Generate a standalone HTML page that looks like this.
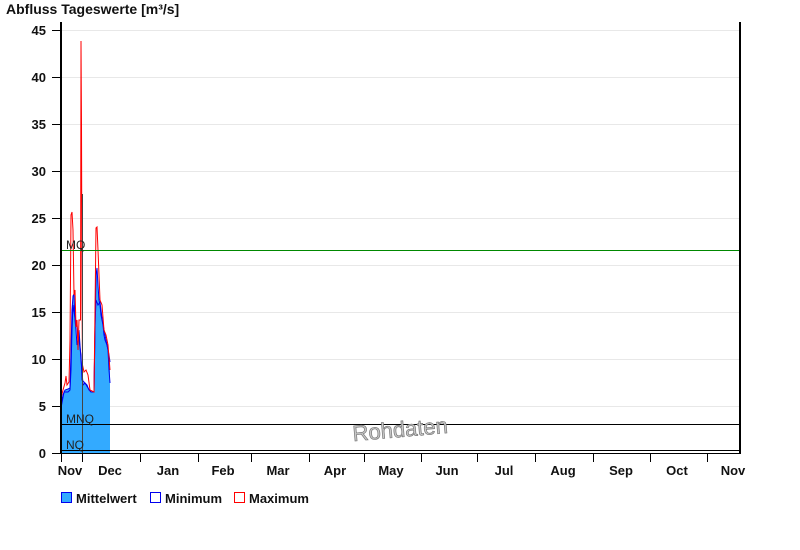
<!DOCTYPE html>
<html><head><meta charset="utf-8"><style>
html,body{margin:0;padding:0;background:#fff;width:800px;height:550px;overflow:hidden}
svg{display:block;font-family:"Liberation Sans",Arial,sans-serif}
</style></head><body>
<svg width="800" height="550" viewBox="0 0 800 550">
<text x="6" y="14" font-size="14" font-weight="bold" fill="#111">Abfluss Tageswerte [m³/s]</text>
<g stroke="#e8e8e8" stroke-width="1">
<line x1="61" y1="30.5" x2="740" y2="30.5"/><line x1="61" y1="77.5" x2="740" y2="77.5"/>
<line x1="61" y1="124.5" x2="740" y2="124.5"/><line x1="61" y1="171.5" x2="740" y2="171.5"/>
<line x1="61" y1="218.5" x2="740" y2="218.5"/><line x1="61" y1="265.5" x2="740" y2="265.5"/>
<line x1="61" y1="312.5" x2="740" y2="312.5"/><line x1="61" y1="359.5" x2="740" y2="359.5"/>
<line x1="61" y1="406.5" x2="740" y2="406.5"/>
</g>
<g font-size="13" font-weight="bold" fill="#111" text-anchor="end">
<text x="46" y="35">45</text><text x="46" y="82">40</text><text x="46" y="129">35</text>
<text x="46" y="176">30</text><text x="46" y="223">25</text><text x="46" y="270">20</text>
<text x="46" y="317">15</text><text x="46" y="364">10</text><text x="46" y="411">5</text>
<text x="46" y="458">0</text>
</g>
<g stroke="#000" stroke-width="1">
<line x1="52" y1="30.5" x2="61" y2="30.5"/><line x1="52" y1="77.5" x2="61" y2="77.5"/>
<line x1="52" y1="124.5" x2="61" y2="124.5"/><line x1="52" y1="171.5" x2="61" y2="171.5"/>
<line x1="52" y1="218.5" x2="61" y2="218.5"/><line x1="52" y1="265.5" x2="61" y2="265.5"/>
<line x1="52" y1="312.5" x2="61" y2="312.5"/><line x1="52" y1="359.5" x2="61" y2="359.5"/>
<line x1="52" y1="406.5" x2="61" y2="406.5"/><line x1="52" y1="453.5" x2="61" y2="453.5"/>
</g>
<polygon fill="#33aaff" points="61,453 61,405 63,395 65,390 68,389 70,388 71,350 72,310 73,296 74,294 75,320 76,330 77,345 78,340 79,330 80,345 81,360 82,370 83,385 85,383 87,385 89,390 91,392 94,392 95,330 96,275 97,268 98,285 99,300 100,305 101,315 102,320 103,325 104,335 105,340 107,345 108,350 109,355 110,362 110,453"/>
<polyline fill="none" stroke="#0000ee" stroke-width="1" points="61,405 63,395 65,390 68,389 70,388 71,350 72,310 73,296 74,294 75,320 76,330 77,345 78,340 79,330 80,345 81,360 82,370 83,385 85,383 87,385 89,390 91,392 94,392 95,330 96,275 97,268 98,285 99,300 100,305 101,315 102,320 103,325 104,335 105,340 107,345 108,350 109,355 110,362"/>
<polyline fill="none" stroke="#0000ee" stroke-width="1" points="61,408 64,392 68,392 70,390 71,370 72,330 73,305 75,318 77,325 78,335 79,340 81,355 82,380 85,383 88,388 91,392 94,392 95,325 96,300 98,305 100,302 102,318 104,330 106,340 108,350 109,370 110,383"/>
<polyline fill="none" stroke="#ff0000" stroke-width="1" points="61,398 63,390 65,383 66,376 67,385 69,382 70,340 71,215 72,212 73,230 74,295 75,290 76,327 77,320 78,350 79,320 80.5,320 81,41 81.5,125 82,300 82.5,365 84,372 86,370 88,375 90,390 94,392 95,310 96,228 97,227 98,250 99,275 100,300 102,305 104,330 106,335 108,345 110,370"/>
<line x1="82.5" y1="194" x2="82.5" y2="453" stroke="#444" stroke-width="1"/>
<line x1="61" y1="250.5" x2="740" y2="250.5" stroke="#008800" stroke-width="1"/>
<line x1="61" y1="424.5" x2="740" y2="424.5" stroke="#000" stroke-width="1"/>
<line x1="61" y1="450.5" x2="740" y2="450.5" stroke="#000" stroke-width="1"/>
<g font-size="12" fill="#222">
<text x="66" y="249">MQ</text><text x="66" y="423">MNQ</text><text x="66" y="449">NQ</text>
</g>
<text x="400" y="437" font-size="22" fill="#c8c8c8" stroke="#777" stroke-width="0.7" text-anchor="middle" transform="rotate(-5 400 428)">Rohdaten</text>
<line x1="61" y1="22" x2="61" y2="454" stroke="#000" stroke-width="2"/>
<line x1="740" y1="22" x2="740" y2="454" stroke="#000" stroke-width="2"/>
<line x1="60" y1="453.5" x2="741" y2="453.5" stroke="#000" stroke-width="1"/>
<g stroke="#000" stroke-width="1">
<line x1="61.5" y1="453" x2="61.5" y2="462"/><line x1="82.5" y1="453" x2="82.5" y2="462"/>
<line x1="140.5" y1="453" x2="140.5" y2="462"/><line x1="198.5" y1="453" x2="198.5" y2="462"/>
<line x1="251.5" y1="453" x2="251.5" y2="462"/><line x1="309.5" y1="453" x2="309.5" y2="462"/>
<line x1="364.5" y1="453" x2="364.5" y2="462"/><line x1="421.5" y1="453" x2="421.5" y2="462"/>
<line x1="477.5" y1="453" x2="477.5" y2="462"/><line x1="535.5" y1="453" x2="535.5" y2="462"/>
<line x1="593.5" y1="453" x2="593.5" y2="462"/><line x1="650.5" y1="453" x2="650.5" y2="462"/>
<line x1="707.5" y1="453" x2="707.5" y2="462"/>
</g>
<g font-size="13" font-weight="bold" fill="#111" text-anchor="middle">
<text x="70" y="475">Nov</text><text x="110" y="475">Dec</text><text x="168" y="475">Jan</text>
<text x="223" y="475">Feb</text><text x="278" y="475">Mar</text><text x="335" y="475">Apr</text>
<text x="391" y="475">May</text><text x="447" y="475">Jun</text><text x="504" y="475">Jul</text>
<text x="563" y="475">Aug</text><text x="621" y="475">Sep</text><text x="677" y="475">Oct</text>
<text x="733" y="475">Nov</text>
</g>
<rect x="61.5" y="492.5" width="10" height="10" fill="#33aaff" stroke="#0000ee"/>
<rect x="150.5" y="492.5" width="10" height="10" fill="#fff" stroke="#0000ee"/>
<rect x="234.5" y="492.5" width="10" height="10" fill="#fff" stroke="#ff0000"/>
<g font-size="13" font-weight="bold" fill="#111">
<text x="76" y="503">Mittelwert</text><text x="165" y="503">Minimum</text><text x="249" y="503">Maximum</text>
</g>
</svg>
</body></html>
